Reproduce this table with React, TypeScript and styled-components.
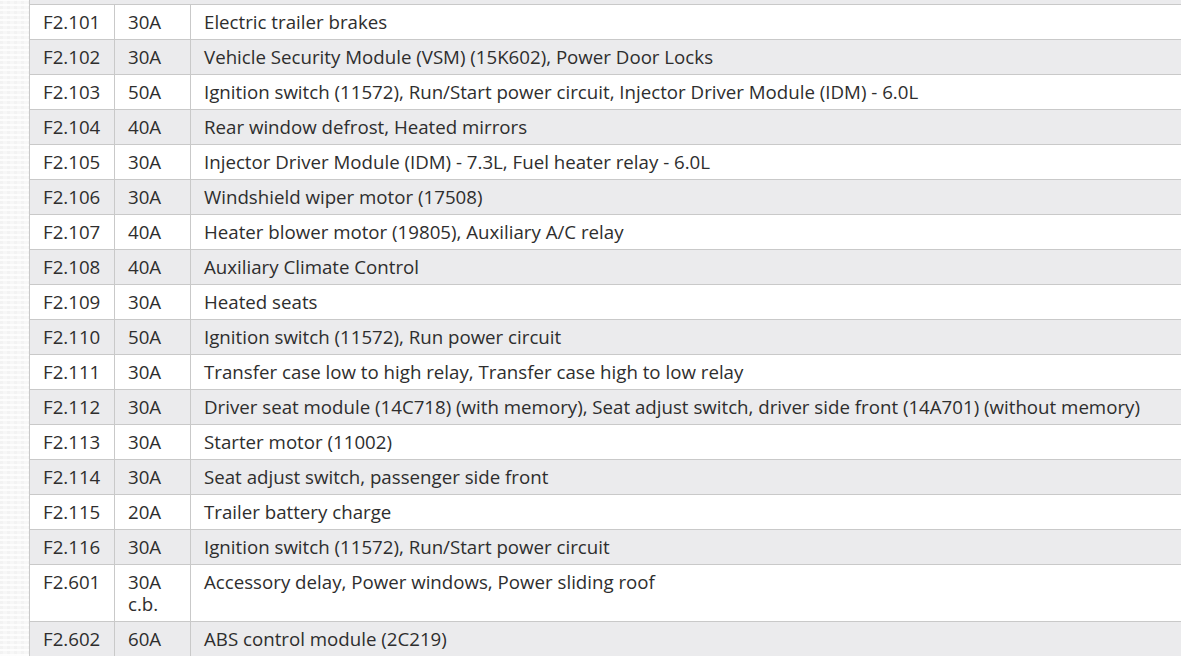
import React from "react";
import styled, { createGlobalStyle } from "styled-components";

const GlobalStyle = createGlobalStyle`
  html, body { margin: 0; padding: 0; }
  body {
    width: 1181px;
    height: 656px;
    overflow: hidden;
    background: #ffffff;
    font-family: "Open Sans", "Noto Sans", sans-serif;
  }
`;

const Page = styled.div`
  display: flex;
  width: 1181px;
  height: 656px;
  overflow: hidden;
`;

const Strip = styled.div`
  flex: 0 0 29px;
  background-color: #f7f7f7;
  background-image:
    repeating-linear-gradient(0deg, rgba(255,255,255,0.8) 0 2px, transparent 2px 5px),
    repeating-linear-gradient(90deg, rgba(238,238,238,0.5) 0 3px, transparent 3px 7px);
`;

const Main = styled.div`
  flex: 1;
  min-width: 0;
  display: flex;
  flex-direction: column;
`;

const TopSliver = styled.div`
  height: 4px;
  flex: 0 0 4px;
  background: #ebebed;
  border-left: 1px solid #c9c9c9;
`;

const Table = styled.table`
  border-collapse: collapse;
  width: 1200px;
  table-layout: fixed;
  color: #2e2e2e;
  font-size: 18.7px;
  line-height: 22px;
`;

const Row = styled.tr<{ $shaded: boolean }>`
  background: ${(p) => (p.$shaded ? "#ebebed" : "#ffffff")};
`;

const Cell = styled.td`
  border: 1px solid #c9c9c9;
  padding: 6px 13px 6px 13px;
  vertical-align: top;
  white-space: nowrap;
`;

const rows: [string, string[], string][] = [
  ["F2.101", ["30A"], "Electric trailer brakes"],
  ["F2.102", ["30A"], "Vehicle Security Module (VSM) (15K602), Power Door Locks"],
  ["F2.103", ["50A"], "Ignition switch (11572), Run/Start power circuit, Injector Driver Module (IDM) - 6.0L"],
  ["F2.104", ["40A"], "Rear window defrost, Heated mirrors"],
  ["F2.105", ["30A"], "Injector Driver Module (IDM) - 7.3L, Fuel heater relay - 6.0L"],
  ["F2.106", ["30A"], "Windshield wiper motor (17508)"],
  ["F2.107", ["40A"], "Heater blower motor (19805), Auxiliary A/C relay"],
  ["F2.108", ["40A"], "Auxiliary Climate Control"],
  ["F2.109", ["30A"], "Heated seats"],
  ["F2.110", ["50A"], "Ignition switch (11572), Run power circuit"],
  ["F2.111", ["30A"], "Transfer case low to high relay, Transfer case high to low relay"],
  ["F2.112", ["30A"], "Driver seat module (14C718) (with memory), Seat adjust switch, driver side front (14A701) (without memory)"],
  ["F2.113", ["30A"], "Starter motor (11002)"],
  ["F2.114", ["30A"], "Seat adjust switch, passenger side front"],
  ["F2.115", ["20A"], "Trailer battery charge"],
  ["F2.116", ["30A"], "Ignition switch (11572), Run/Start power circuit"],
  ["F2.601", ["30A", "c.b."], "Accessory delay, Power windows, Power sliding roof"],
  ["F2.602", ["60A"], "ABS control module (2C219)"],
];

export default function App() {
  return (
    <>
      <GlobalStyle />
      <Page>
        <Strip />
        <Main>
          <TopSliver />
          <Table>
            <colgroup>
              <col style={{ width: 85 }} />
              <col style={{ width: 76 }} />
              <col />
            </colgroup>
            <tbody>
              {rows.map(([fuse, amps, desc], i) => (
                <Row key={fuse} $shaded={i % 2 === 1}>
                  <Cell>{fuse}</Cell>
                  <Cell>
                    {amps.map((a, j) => (
                      <div key={j}>{a}</div>
                    ))}
                  </Cell>
                  <Cell>{desc}</Cell>
                </Row>
              ))}
            </tbody>
          </Table>
        </Main>
      </Page>
    </>
  );
}
